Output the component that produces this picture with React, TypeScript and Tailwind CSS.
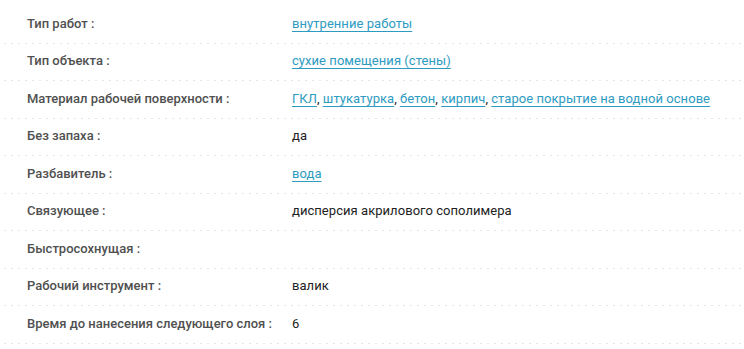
import React from "react";

type Value = { text: string; href?: boolean };

const rows: { label: string; values: Value[] }[] = [
  { label: "Тип работ :", values: [{ text: "внутренние работы", href: true }] },
  { label: "Тип объекта :", values: [{ text: "сухие помещения (стены)", href: true }] },
  {
    label: "Материал рабочей поверхности :",
    values: [
      { text: "ГКЛ", href: true },
      { text: "штукатурка", href: true },
      { text: "бетон", href: true },
      { text: "кирпич", href: true },
      { text: "старое покрытие на водной основе", href: true },
    ],
  },
  { label: "Без запаха :", values: [{ text: "да" }] },
  { label: "Разбавитель :", values: [{ text: "вода", href: true }] },
  { label: "Связующее :", values: [{ text: "дисперсия акрилового сополимера" }] },
  { label: "Быстросохнущая :", values: [] },
  { label: "Рабочий инструмент :", values: [{ text: "валик" }] },
  { label: "Время до нанесения следующего слоя :", values: [{ text: "6" }] },
];

export default function App() {
  return (
    <div className="w-[744px] h-[349px] overflow-hidden bg-white pt-[6px] font-['Roboto',sans-serif] text-[13px]">
      {rows.map((row) => (
        <div
          key={row.label}
          className="flex items-center h-[37.5px] pb-[3px] bg-[linear-gradient(to_right,#c8c8c8_1px,transparent_1px)] bg-[length:7px_1px] bg-repeat-x bg-bottom"
        >
          <div className="w-[292px] pl-[27px] font-medium text-[#505050]">{row.label}</div>
          <div className="text-[#222] tracking-[0.05px]">
            {row.values.map((v, i) => (
              <React.Fragment key={v.text}>
                {i > 0 && ", "}
                {v.href ? (
                  <a href="#" className="text-[#2d9bc2] underline underline-offset-[3px]">
                    {v.text}
                  </a>
                ) : (
                  v.text
                )}
              </React.Fragment>
            ))}
          </div>
        </div>
      ))}
    </div>
  );
}
